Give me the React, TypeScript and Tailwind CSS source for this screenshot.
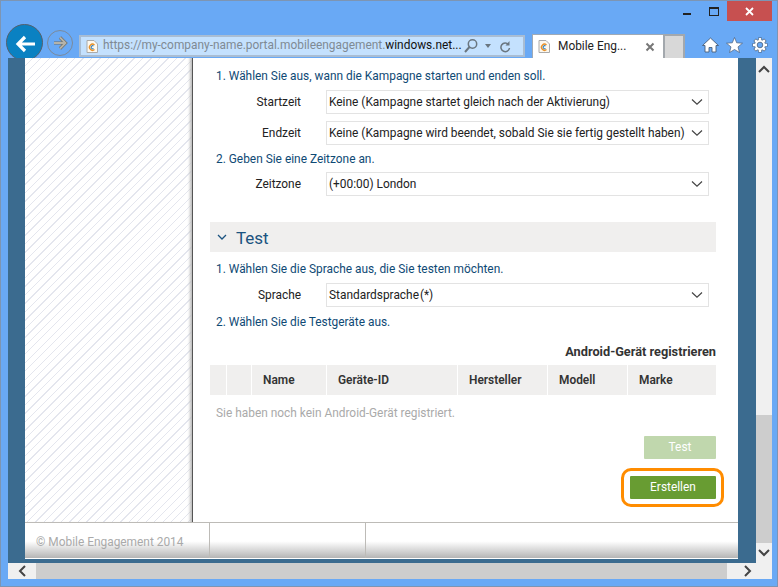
import React from "react";

const Chevron = () => (
  <svg width="12" height="8" viewBox="0 0 12 8" className="mr-[5px] shrink-0">
    <path d="M1 1.500 L6 6.200 L11 1.500" fill="none" stroke="#444" strokeWidth="1.200" />
  </svg>
);

const Select = ({ text, tight }: { text: string; tight?: boolean }) => (
  <div className="flex h-6 w-[383px] items-center justify-between border border-[#e3e3e3] bg-white pl-[2px] text-[#222]">
    <span className={`whitespace-nowrap pt-[1px] ${tight ? "[word-spacing:-2px]" : ""}`}>{text}</span>
    <Chevron />
  </div>
);

const Row = ({ label, text, mt, tight }: { label: string; text: string; mt: string; tight?: boolean }) => (
  <div className={`flex items-center ${mt}`}>
    <div className="w-[116px] pr-[25px] pt-[1px] text-right text-[#222]">{label}</div>
    <Select text={text} tight={tight} />
  </div>
);

const Step = ({ children, mt }: { children: React.ReactNode; mt: string }) => (
  <div className={`pl-[6px] leading-4 text-[#0f4a75] ${mt}`}>{children}</div>
);

const Favicon = () => (
  <svg width="12" height="13" viewBox="0 0 12 13" className="shrink-0">
    <path d="M1 .5H8L11.500 4V12.500H1Z" fill="#fdf8ee" stroke="#aaa" />
    <path d="M8.500 5A3 3 0 1 0 8.500 9.500" fill="none" stroke="#e8912a" strokeWidth="1.400" />
    <path d="M7.500 6A1.500 1.500 0 1 0 7.500 8.500" fill="none" stroke="#2a7fc0" strokeWidth="1.100" />
  </svg>
);

const Th = ({ w, children }: { w: string; children?: React.ReactNode }) => (
  <div className={`flex h-full items-center bg-[#f0efee] pl-[11px] pt-[2px] font-semibold text-[#333] ${w}`}>{children}</div>
);

export default function App() {
  return (
    <div
      className="relative flex h-[587px] w-[778px] flex-col overflow-hidden border border-[#7d95b3] bg-[#69a9f5] text-[11.9px]"
      style={{ fontFamily: 'Roboto, "Noto Sans", sans-serif' }}
    >
      {/* title bar */}
      <div className="flex h-5 shrink-0 justify-end pr-[5px]">
        <div className="mr-[18px] mt-[12px] h-[2px] w-[8px] bg-[#222]" />
        <div className="mr-[8px] mt-[6px] h-[9px] w-[10px] border border-t-2 border-[#222]" />
        <div className="flex h-5 w-[45px] items-center justify-center bg-[#c75050]">
          <svg width="9" height="9" viewBox="0 0 9 9">
            <path d="M1 1 L8 8 M8 1 L1 8" stroke="#fff" strokeWidth="1.800" />
          </svg>
        </div>
      </div>

      {/* toolbar */}
      <div className="relative flex h-[37px] shrink-0 items-end pl-[78px]">
        <div className="absolute left-[5px] top-[3px] flex h-[37px] w-[37px] items-center justify-center rounded-full border border-[#55606c] bg-[#0a81c2]">
          <svg width="20" height="18" viewBox="0 0 20 18" className="mt-[2px]">
            <path d="M10 2 L3 9 L10 16 M3 9 H20" fill="none" stroke="#fff" strokeWidth="3.200" />
          </svg>
        </div>
        <div className="absolute left-[46px] top-[9px] flex h-[26px] w-[26px] items-center justify-center rounded-full border border-[#7b8a9b]">
          <svg width="16" height="14" viewBox="0 0 16 14">
            <path d="M8 1.500 L13.500 7 L8 12.500 M13 7 H2" fill="none" stroke="#6f6f68" strokeWidth="3.200" />
            <path d="M8 1.500 L13.500 7 L8 12.500 M13 7 H2" fill="none" stroke="#b4b3aa" strokeWidth="1.800" />
          </svg>
        </div>
        <div className="mb-[1px] flex h-[22px] w-[446px] items-center border-2 border-[#a9bdd3] bg-[#c4e1fe] pl-[5px]">
          <Favicon />
          <span className="ml-[5px] w-[359px] overflow-hidden whitespace-nowrap text-[#7f8a94]">
            https://my-company-name.portal.mobileengagement.<span className="text-[#111]">windows.net...</span>
          </span>
          <svg width="16" height="16" viewBox="0 0 16 16" className="ml-[1px] shrink-0">
            <circle cx="9.500" cy="6" r="4.200" fill="none" stroke="#6a7680" strokeWidth="1.500" />
            <path d="M6.500 9 L2 14" stroke="#6a7680" strokeWidth="2" />
          </svg>
          <svg width="8" height="4" viewBox="0 0 8 4" className="ml-[5px] shrink-0">
            <path d="M1 0H7L4 4Z" fill="#6a7680" />
          </svg>
          <svg width="12" height="13" viewBox="0 0 12 13" className="ml-[7px] shrink-0">
            <path d="M9.500 4.500A4.300 4.300 0 1 0 10.500 8" fill="none" stroke="#6a7680" strokeWidth="1.500" />
            <path d="M10.500 1V5.500H6.500Z" fill="#6a7680" />
          </svg>
        </div>
        <div className="ml-[7px] flex h-6 w-[131px] items-center border-t border-l border-[#a0aab5] bg-white pl-[5px]">
          <Favicon />
          <span className="ml-[8px] w-[78px] whitespace-nowrap text-[#222]">Mobile Eng...</span>
          <svg width="10" height="10" viewBox="0 0 10 10" className="ml-[9px] shrink-0">
            <path d="M1.500 1.500 L8.500 8.500 M8.500 1.500 L1.500 8.500" stroke="#777" strokeWidth="2" />
          </svg>
        </div>
        <div className="h-6 w-[22px] border-2 border-b-0 border-[#a3a8ad] bg-[#d8d8d8]" />
        <div className="mb-[5px] ml-[17px] flex items-center">
          <svg width="17" height="16" viewBox="0 0 17 16">
            <path d="M8.500 1 L16.500 8.500 H14 V15 H10 V10.500 H7 V15 H3 V8.500 H.5 Z" fill="#fff" stroke="#4a5f78" strokeWidth=".9" />
          </svg>
          <svg width="17" height="16" viewBox="0 0 17 16" className="ml-[7px]">
            <path d="M8.500 .5 L10.700 5.800 L16.500 6.200 L12 9.900 L13.500 15.500 L8.500 12.500 L3.500 15.500 L5 9.900 L.5 6.200 L6.300 5.800 Z" fill="#fff" stroke="#4a5f78" strokeWidth=".7" />
          </svg>
          <svg width="16" height="16" viewBox="0 0 16 16" className="ml-[9px]">
            <g stroke="#4a5f78" strokeWidth="3.600">
              <path d="M8 .5V15.500M.5 8H15.500M2.700 2.700L13.300 13.300M13.300 2.700L2.700 13.300" />
            </g>
            <circle cx="8" cy="8" r="5.500" fill="#fff" stroke="#4a5f78" strokeWidth=".8" />
            <g stroke="#fff" strokeWidth="2.400">
              <path d="M8 1V15M1 8H15M3.100 3.100L12.900 12.900M12.900 3.100L3.100 12.900" />
            </g>
            <circle cx="8" cy="8" r="2.800" fill="#69a9f5" stroke="#4a5f78" strokeWidth=".8" />
          </svg>
        </div>
      </div>

      {/* viewport */}
      <div className="relative flex min-h-0 flex-1 pl-[7px] pr-[5px]">
        <div className="flex min-w-0 flex-1 flex-col">
          <div className="flex min-h-0 flex-1">
            <div className="flex min-w-0 flex-1 flex-col border-b-[4px] border-l-[17px] border-r-[18px] border-[#3b6b8f]">
              <div className="flex min-h-0 flex-1">
                <div
                  className="w-[168px] shrink-0 border-r border-[#555] shadow-[inset_-4px_0_3px_-2px_#bbb]"
                  style={{ backgroundImage: "repeating-linear-gradient(135deg, #fff 0 5px, #e4e6ee 5px 6px)" }}
                />
                <div className="flex min-w-0 flex-1 flex-col bg-white pl-[17px] pr-[22px]">
                  <Step mt="mt-[10px]">1. Wählen Sie aus, wann die Kampagne starten und enden soll.</Step>
                  <Row mt="mt-[6px]" label="Startzeit" text="Keine (Kampagne startet gleich nach der Aktivierung)" />
                  <Row mt="mt-[7px]" label="Endzeit" text="Keine (Kampagne wird beendet, sobald Sie sie fertig gestellt haben)" />
                  <Step mt="mt-[6px]">2. Geben Sie eine Zeitzone an.</Step>
                  <Row mt="mt-[5px]" label="Zeitzone" text="(+00:00) London" />
                  <div className="mt-[26px] flex h-[30px] shrink-0 items-center bg-[#f0efee] pl-[7px] text-[17px] text-[#1b5380]">
                    <svg width="10" height="7" viewBox="0 0 10 7">
                      <path d="M1 1 L5 5 L9 1" fill="none" stroke="#1b5380" strokeWidth="1.300" />
                    </svg>
                    <span className="ml-[9px] pt-[3px]">Test</span>
                  </div>
                  <Step mt="mt-[9px]">1. Wählen Sie die Sprache aus, die Sie testen möchten.</Step>
                  <Row mt="mt-[6px]" label="Sprache" text="Standardsprache (*)" tight />
                  <Step mt="mt-[7px]">2. Wählen Sie die Testgeräte aus.</Step>
                  <div className="mt-[14px] text-right text-[12.750px] font-bold leading-4 text-[#333]">Android-Gerät registrieren</div>
                  <div className="mt-[5px] flex h-[30px] shrink-0 gap-[1px]">
                    <div className="h-full w-4 bg-[#f0efee]" />
                    <div className="h-full w-6 bg-[#f0efee]" />
                    <Th w="w-[74px]">Name</Th>
                    <Th w="w-[130px]">Geräte-ID</Th>
                    <Th w="w-[89px]">Hersteller</Th>
                    <Th w="w-[79px]">Modell</Th>
                    <Th w="flex-1">Marke</Th>
                  </div>
                  <div className="mt-[10px] pl-[6px] leading-4 text-[#aaa]">Sie haben noch kein Android-Gerät registriert.</div>
                  <div className="mt-[15px] flex justify-end">
                    <div className="flex h-[23px] w-[72px] items-center justify-center rounded-[1px] bg-[#c0d7ad] pt-[1px] text-white">Test</div>
                  </div>
                  <div className="relative mt-[17px] flex justify-end">
                    <div className="flex h-[23px] w-[86px] items-center justify-center rounded-[1px] bg-[#689c32] pt-[1px] text-white">Erstellen</div>
                    <div className="absolute right-[-8px] top-[-8px] h-[39px] w-[103px] rounded-[10px] border-[3px] border-[#ff8c00]" />
                  </div>
                </div>
              </div>
              <div className="flex h-[37px] shrink-0 border-b border-t border-b-white border-t-[#bdbbb7] bg-[linear-gradient(to_bottom,#fff_0%,#fff_52%,#b5b5b5_100%)] text-[#aaa]">
                <div className="flex w-[185px] items-start border-r border-[#bdbbb7] pl-[11px] pt-[11px] leading-4">© Mobile Engagement 2014</div>
                <div className="w-[156px] border-r border-[#bdbbb7]" />
              </div>
            </div>
            <div className="flex w-4 shrink-0 flex-col bg-[#cdcdcd]">
              <div className="flex h-[357px] justify-center bg-[#f0f0f0] pt-[7px]">
                <svg width="12" height="8" viewBox="0 0 12 8">
                  <path d="M1 7 L6 2 L11 7" fill="none" stroke="#444" strokeWidth="2" />
                </svg>
              </div>
              <div className="flex-1" />
              <div className="flex h-5 items-center justify-center bg-[#f0f0f0]">
                <svg width="12" height="8" viewBox="0 0 12 8">
                  <path d="M1 1 L6 6 L11 1" fill="none" stroke="#444" strokeWidth="2" />
                </svg>
              </div>
            </div>
          </div>
          <div className="flex h-4 shrink-0 bg-[#cdcdcd]">
            <div className="flex w-7 items-center justify-center bg-[#f0f0f0]">
              <svg width="8" height="12" viewBox="0 0 8 12">
                <path d="M7 1 L2 6 L7 11" fill="none" stroke="#444" strokeWidth="2" />
              </svg>
            </div>
            <div className="flex-1" />
            <div className="flex w-[45px] items-center justify-start bg-[#f0f0f0] pl-[17px]">
              <svg width="8" height="12" viewBox="0 0 8 12">
                <path d="M1 1 L6 6 L1 11" fill="none" stroke="#444" strokeWidth="2" />
              </svg>
            </div>
          </div>
        </div>
      </div>
      <div className="h-[7px] shrink-0" />
    </div>
  );
}
